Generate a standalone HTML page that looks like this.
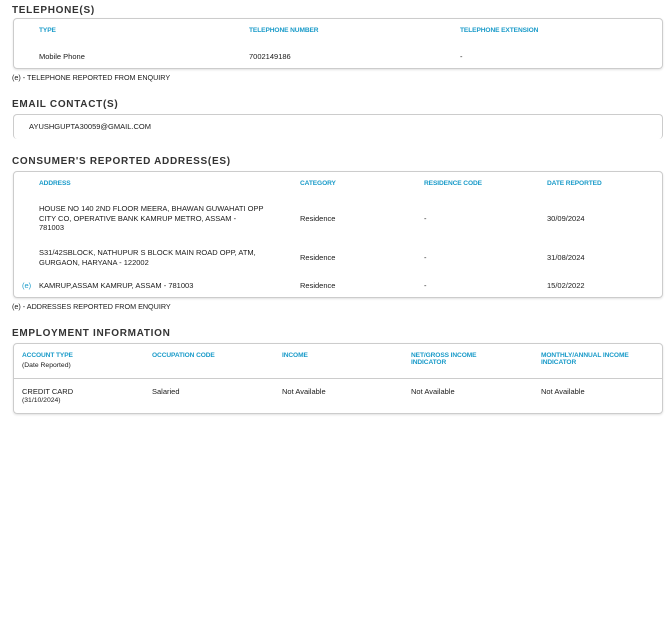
<!DOCTYPE html>
<html><head><style>
body{margin:0;width:672px;height:638px;background:#fff;font-family:"Liberation Sans",sans-serif;color:#222;position:relative;overflow:hidden}
.a{position:absolute;white-space:nowrap}
.t{font-size:10px;font-weight:bold;color:#333;letter-spacing:0.7px}
.h{font-size:6.6px;font-weight:bold;color:#1a9bc9;line-height:8px;letter-spacing:-0.1px}
.d{font-size:7.5px;color:#1a1a1a;line-height:9.5px}
.box{position:absolute;border:1px solid #ccc;border-radius:4px;box-shadow:0 1px 2px rgba(0,0,0,0.12)}
</style></head><body>
<div class="a t" style="left:12px;top:5px">TELEPHONE(S)</div>
<div class="box" style="left:13px;top:18px;width:648px;height:49px"></div>
<div class="a h" style="left:39px;top:27px">TYPE</div>
<div class="a h" style="left:249px;top:27px">TELEPHONE NUMBER</div>
<div class="a h" style="left:460px;top:27px">TELEPHONE EXTENSION</div>
<div class="a d" style="left:39px;top:52px">Mobile Phone</div>
<div class="a d" style="left:249px;top:52px">7002149186</div>
<div class="a d" style="left:460px;top:52px">-</div>
<div class="a d" style="left:12px;top:73px;font-size:7.2px">(e) - TELEPHONE REPORTED FROM ENQUIRY</div>

<div class="a t" style="left:12px;top:99px">EMAIL CONTACT(S)</div>
<div class="box" style="left:13px;top:114px;width:648px;height:24px;border-bottom:none;box-shadow:none"></div>
<div class="a d" style="left:29px;top:122px">AYUSHGUPTA30059@GMAIL.COM</div>

<div class="a t" style="left:12px;top:156px">CONSUMER'S REPORTED ADDRESS(ES)</div>
<div class="box" style="left:13px;top:171px;width:648px;height:125px"></div>
<div class="a h" style="left:39px;top:180px">ADDRESS</div>
<div class="a h" style="left:300px;top:180px">CATEGORY</div>
<div class="a h" style="left:424px;top:180px">RESIDENCE CODE</div>
<div class="a h" style="left:547px;top:180px">DATE REPORTED</div>
<div class="a d" style="left:39px;top:204px">HOUSE NO 140 2ND FLOOR MEERA, BHAWAN GUWAHATI OPP<br>CITY CO, OPERATIVE BANK KAMRUP METRO, ASSAM -<br>781003</div>
<div class="a d" style="left:300px;top:214px">Residence</div>
<div class="a d" style="left:424px;top:214px">-</div>
<div class="a d" style="left:547px;top:214px">30/09/2024</div>
<div class="a d" style="left:39px;top:248px">S31/42SBLOCK, NATHUPUR S BLOCK MAIN ROAD OPP, ATM,<br>GURGAON, HARYANA - 122002</div>
<div class="a d" style="left:300px;top:253px">Residence</div>
<div class="a d" style="left:424px;top:253px">-</div>
<div class="a d" style="left:547px;top:253px">31/08/2024</div>
<div class="a d" style="left:22px;top:281px;color:#1a9bc9">(e)</div>
<div class="a d" style="left:39px;top:281px">KAMRUP,ASSAM KAMRUP, ASSAM - 781003</div>
<div class="a d" style="left:300px;top:281px">Residence</div>
<div class="a d" style="left:424px;top:281px">-</div>
<div class="a d" style="left:547px;top:281px">15/02/2022</div>
<div class="a d" style="left:12px;top:302px;font-size:7.2px">(e) - ADDRESSES REPORTED FROM ENQUIRY</div>

<div class="a t" style="left:12px;top:328px">EMPLOYMENT INFORMATION</div>
<div class="box" style="left:13px;top:343px;width:648px;height:69px"></div>
<div class="a" style="left:14px;top:378px;width:648px;border-top:1px solid #ccc"></div>
<div class="a h" style="left:22px;top:352px">ACCOUNT TYPE</div>
<div class="a d" style="left:22px;top:361px;font-size:6.8px">(Date Reported)</div>
<div class="a h" style="left:152px;top:352px">OCCUPATION CODE</div>
<div class="a h" style="left:282px;top:352px">INCOME</div>
<div class="a h" style="left:411px;top:352px;line-height:7px">NET/GROSS INCOME<br>INDICATOR</div>
<div class="a h" style="left:541px;top:352px;line-height:7px">MONTHLY/ANNUAL INCOME<br>INDICATOR</div>
<div class="a d" style="left:22px;top:387px">CREDIT CARD</div>
<div class="a d" style="left:22px;top:396px;font-size:6.8px">(31/10/2024)</div>
<div class="a d" style="left:152px;top:387px">Salaried</div>
<div class="a d" style="left:282px;top:387px">Not Available</div>
<div class="a d" style="left:411px;top:387px">Not Available</div>
<div class="a d" style="left:541px;top:387px">Not Available</div>
</body></html>
